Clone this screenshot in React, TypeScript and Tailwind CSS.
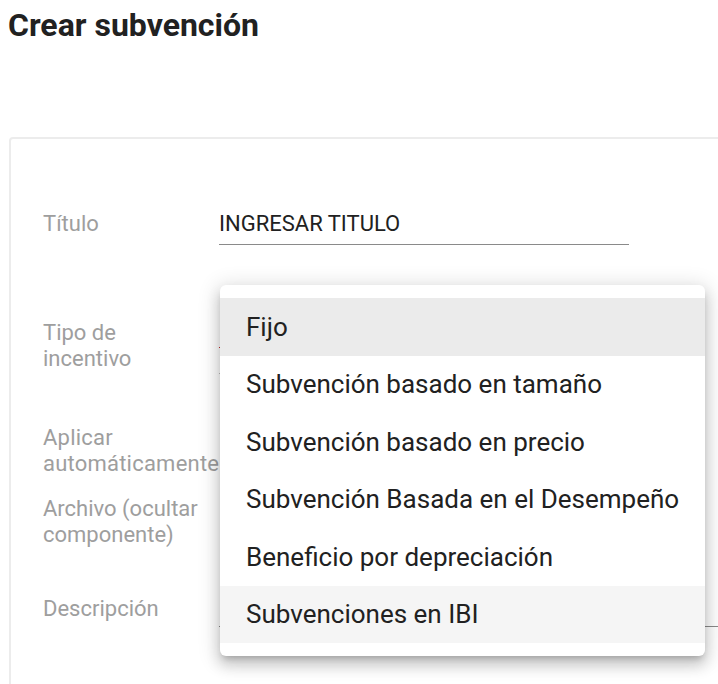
import React from "react";

const items = [
  { label: "Fijo", bg: "bg-[#ebebeb]" },
  { label: "Subvención basado en tamaño", bg: "" },
  { label: "Subvención basado en precio", bg: "" },
  { label: "Subvención Basada en el Desempeño", bg: "" },
  { label: "Beneficio por depreciación", bg: "" },
  { label: "Subvenciones en IBI", bg: "bg-[#f5f5f5]" },
];

export default function App() {
  return (
    <div className="relative w-[718px] h-[684px] overflow-hidden bg-white font-['Roboto',sans-serif]">
      <h1 className="pl-[8px] pt-[7px] text-[32px] leading-[37px] font-bold text-[#212121]">
        Crear subvención
      </h1>
      <div className="mt-[93px] ml-[9px] w-[780px] h-[700px] border-2 border-[#ececec] rounded-[4px] pt-[72px] pl-[32px] text-[22px] leading-[26px]">
        <div className="flex h-[109px]">
          <div className="w-[160px] mr-[16px] shrink-0 text-[#9e9e9e]">Título</div>
          <div className="w-[410px] h-[34px] border-b border-[#8a8a8a] text-[#212121]">INGRESAR TITULO</div>
        </div>
        <div className="flex h-[105px]">
          <div className="w-[160px] mr-[16px] shrink-0 text-[#9e9e9e]">Tipo de incentivo</div>
          <div className="w-[410px] flex flex-col">
            <div className="h-[28px] border-b border-[#c62828]" />
            <div className="h-[26px] border-b border-[#bdbdbd]" />
          </div>
        </div>
        <div className="flex h-[71px]">
          <div className="w-[160px] mr-[16px] shrink-0 text-[#9e9e9e] tracking-[0.01em]">Aplicar automáticamente</div>
        </div>
        <div className="flex h-[100px]">
          <div className="w-[160px] mr-[16px] shrink-0 text-[#9e9e9e]">Archivo (ocultar componente)</div>
        </div>
        <div className="flex">
          <div className="w-[160px] mr-[16px] shrink-0 text-[#9e9e9e]">Descripción</div>
          <div className="flex-1 h-[31px] border-b border-[#8a8a8a]" />
        </div>
      </div>

      <div className="absolute left-[220px] top-[285px] w-[485px] rounded-[6px] bg-white py-[13px] shadow-[0_5px_6px_-3px_rgba(0,0,0,0.2),0_9px_14px_1px_rgba(0,0,0,0.14),0_3px_20px_4px_rgba(0,0,0,0.12)]">
        {items.map((it) => (
          <div
            key={it.label}
            className={`h-[57.5px] flex items-center pl-[26px] text-[26px] leading-[30px] text-[#212121] ${it.bg}`}
          >
            {it.label}
          </div>
        ))}
      </div>
    </div>
  );
}
